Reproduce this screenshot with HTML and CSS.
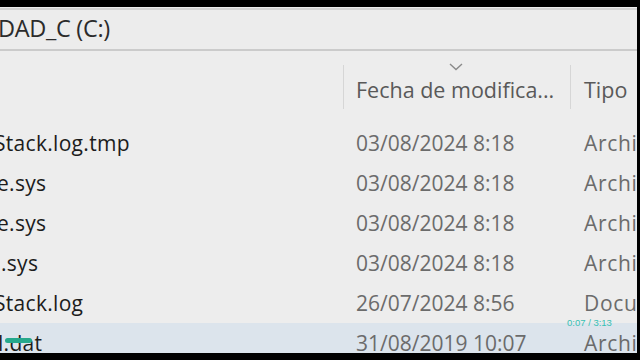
FILE: index.html
```html
<!DOCTYPE html>
<html lang="es">
<head>
<meta charset="utf-8">
<link rel="stylesheet" href="styles.css">
</head>
<body>
<div class="screen">
  <div class="window">
    <div class="address"><span class="path">DAD_C (C:)</span></div>
    <div class="list">
      <div class="header">
        <div class="col name"></div>
        <div class="col date sep">
          <svg class="chev" width="14" height="8" viewBox="0 0 14 8"><path d="M1 1 L7 6.5 L13 1" fill="none" stroke="#8a8a8a" stroke-width="1.4"/></svg>
          <span>Fecha de modifica...</span>
        </div>
        <div class="col type sep"><span>Tipo</span></div>
      </div>
      <div class="row"><div class="col name"><span class="clip1">Stack.log.tmp</span></div><div class="col date">03/08/2024 8:18</div><div class="col type">Archivo TMP</div></div>
      <div class="row"><div class="col name"><span class="clip2">e.sys</span></div><div class="col date">03/08/2024 8:18</div><div class="col type">Archivo de sistema</div></div>
      <div class="row"><div class="col name"><span class="clip2">e.sys</span></div><div class="col date">03/08/2024 8:18</div><div class="col type">Archivo de sistema</div></div>
      <div class="row"><div class="col name"><span class="clip3">.sys</span></div><div class="col date">03/08/2024 8:18</div><div class="col type">Archivo de sistema</div></div>
      <div class="row"><div class="col name"><span class="clip1">Stack.log</span></div><div class="col date">26/07/2024 8:56</div><div class="col type">Documento de texto</div></div>
      <div class="row selected"><div class="col name"><span class="clip4">l.dat</span></div><div class="col date">31/08/2019 10:07</div><div class="col type">Archivo DAT</div></div>
    </div>
  </div>
  <div class="time">0:07 / 3:13</div>
  <div class="progress"></div>
</div>
</body>
</html>
```
FILE: styles.css
```css
html, body {
  margin: 0;
  padding: 0;
  background: #000;
}
.screen {
  position: relative;
  width: 640px;
  height: 360px;
  overflow: hidden;
  background: #000;
  padding: 7px 3px 7px 0;
  box-sizing: border-box;
  font-family: "Open Sans", "Noto Sans", sans-serif;
}
.window {
  height: 346px;
  background: #ededed;
  overflow: hidden;
  display: flex;
  flex-direction: column;
}
.address {
  height: 39px;
  margin-top: 1px;
  border-top: 2px solid #d4d4d4;
  border-bottom: 2px solid #cbcbcb;
  background: #ececec;
  display: flex;
  align-items: center;
  flex-shrink: 0;
}
.path {
  font-size: 23.5px;
  color: #2b2b2b;
  letter-spacing: -0.3px;
  margin-left: -2px;
  line-height: 1;
  padding-bottom: 2px;
}
.list {
  display: flex;
  flex-direction: column;
}
.header {
  height: 72px;
  display: flex;
  flex-shrink: 0;
}
.header .col {
  position: relative;
  display: flex;
  align-items: center;
  font-size: 21.5px;
  color: #595959;
  padding-top: 4px;
  box-sizing: border-box;
}
.header .sep::before {
  content: "";
  position: absolute;
  left: 0;
  top: 14px;
  height: 44px;
  width: 1px;
  background: #d6d6d6;
}
.chev {
  position: absolute;
  top: 12px;
  left: 106px;
}
.col {
  box-sizing: border-box;
  white-space: nowrap;
  overflow: hidden;
}
.col.name {
  width: 343px;
  flex-shrink: 0;
}
.col.date {
  width: 227px;
  flex-shrink: 0;
  padding-left: 13px;
}
.col.type {
  flex: 1;
  padding-left: 14px;
}
.row {
  height: 40px;
  display: flex;
  align-items: center;
  font-size: 21px;
  flex-shrink: 0;
}
.row .name {
  color: #1c1c1c;
  letter-spacing: 0.3px;
}
.row .date, .row .type {
  color: #6b6b6b;
}
.row .type {
  letter-spacing: 0.7px;
}
.row.selected {
  background: #dce4ec;
}
.clip1 { margin-left: -6px; }
.clip2 { margin-left: -3px; }
.clip3 { margin-left: 1px; }
.clip4 { margin-left: -2px; }
.time {
  position: absolute;
  left: 567px;
  top: 317px;
  font-size: 9.5px;
  color: #36c0b4;
  font-family: "Liberation Sans", sans-serif;
}
.progress {
  position: absolute;
  left: 5px;
  top: 338px;
  width: 27px;
  height: 5px;
  border-radius: 3px;
  background: #26a88c;
}
```
